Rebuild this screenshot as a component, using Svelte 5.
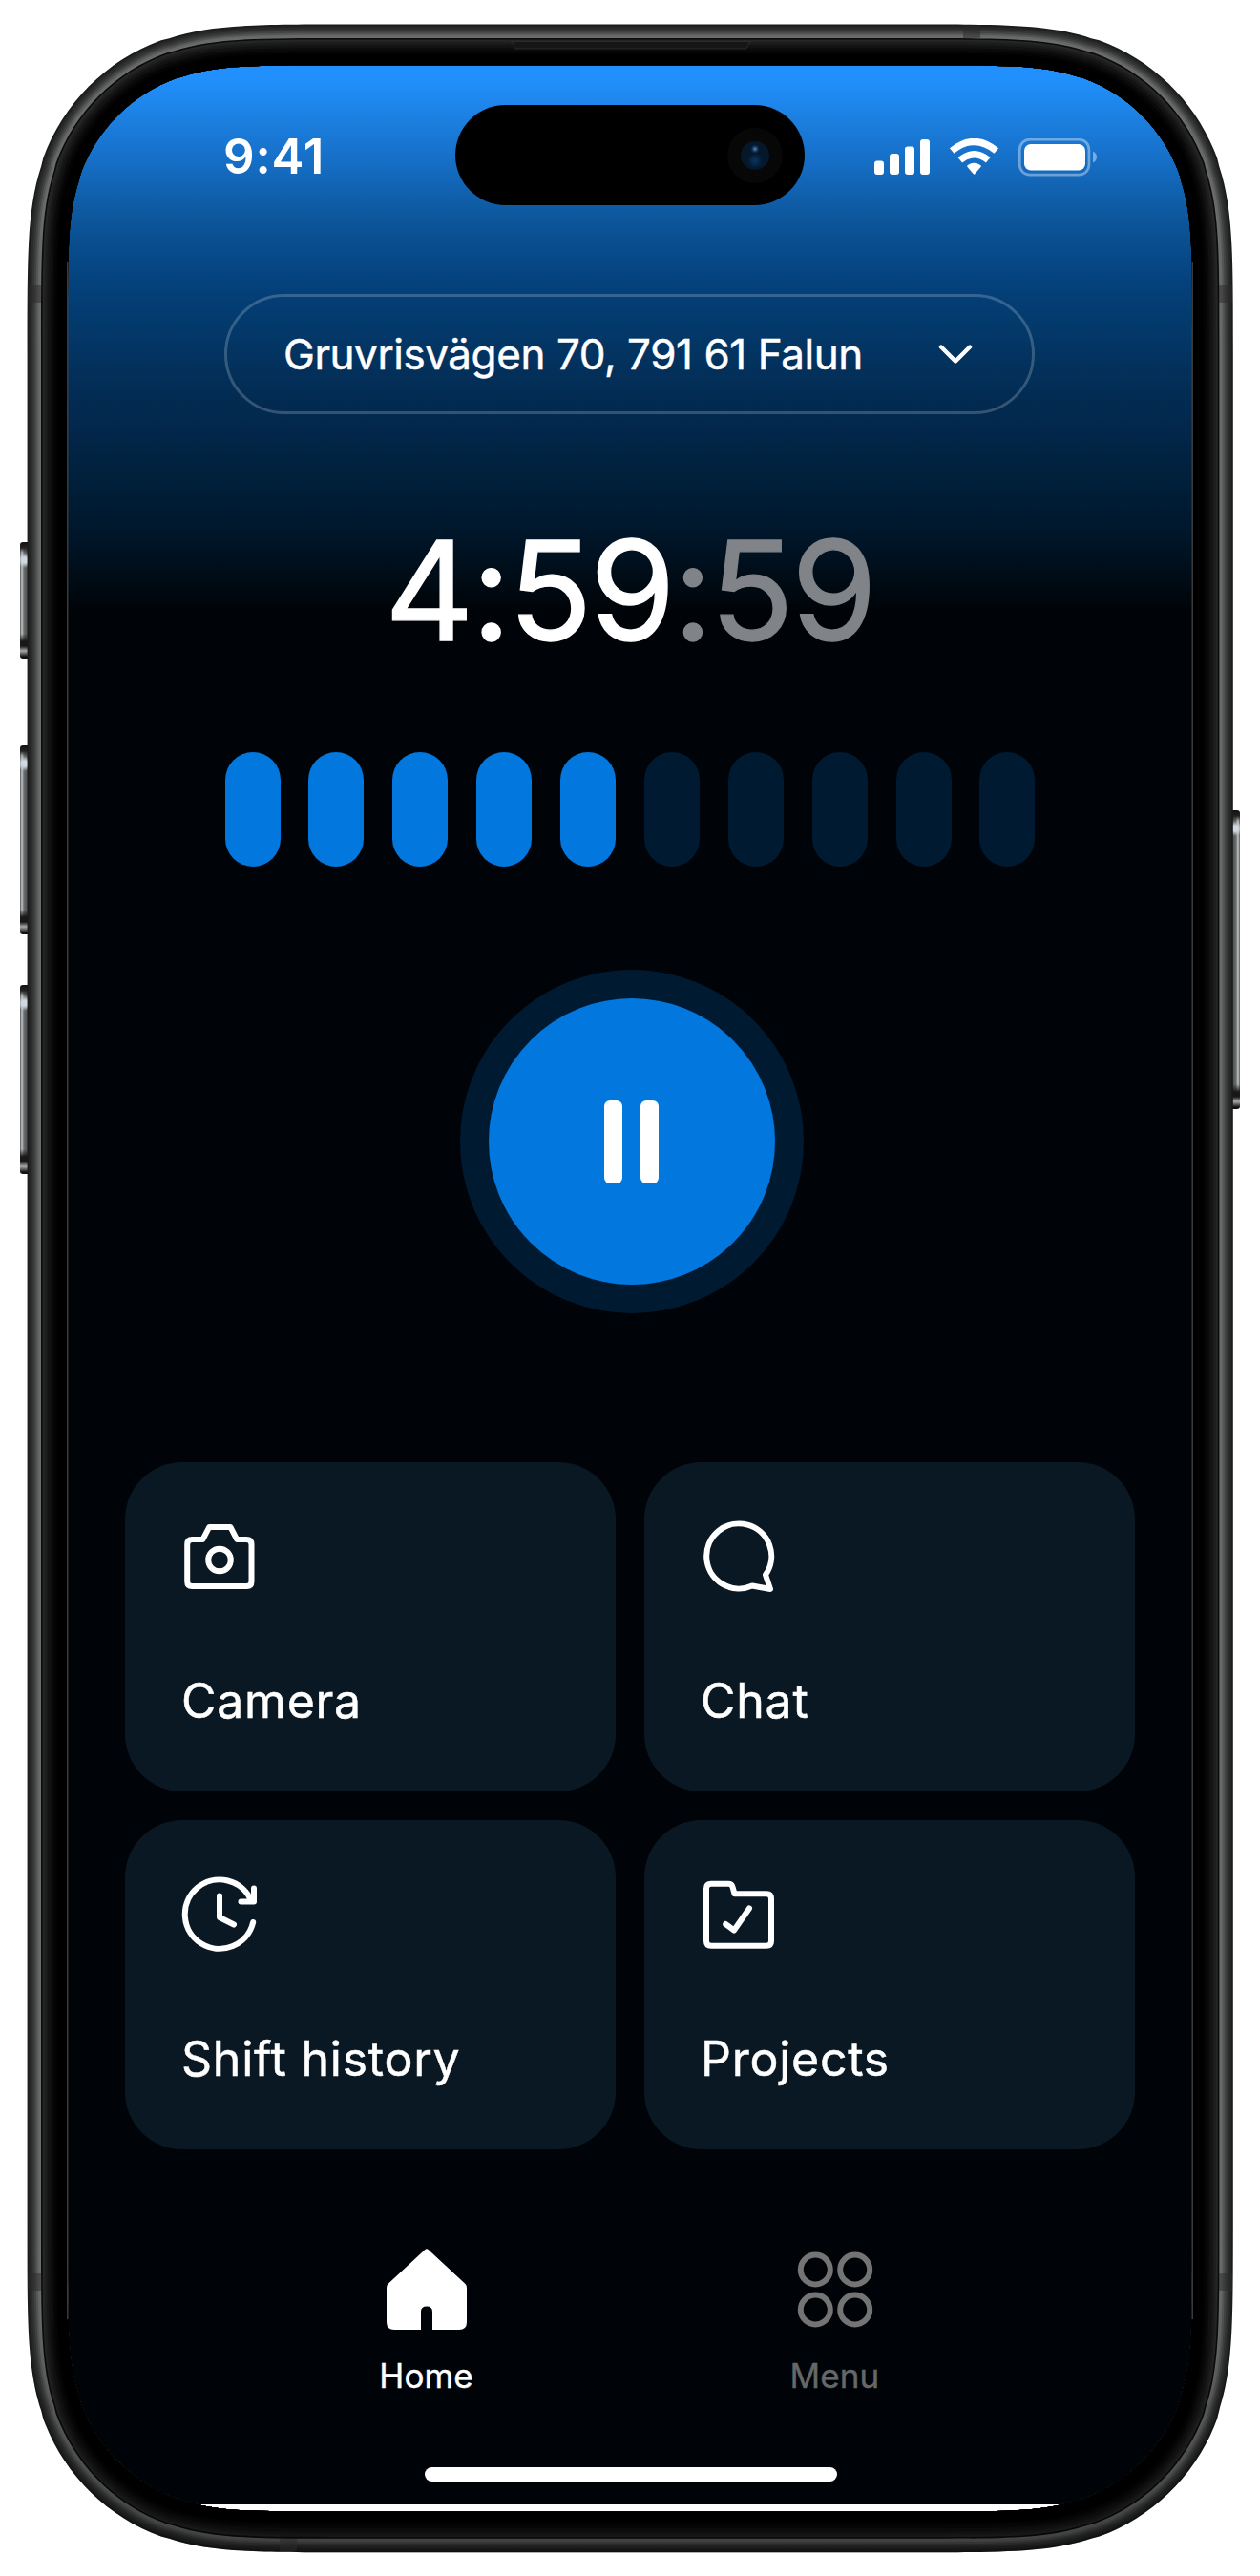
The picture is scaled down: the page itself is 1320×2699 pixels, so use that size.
<script>
  // Continuous-curvature rounded rectangle; r is the nominal corner radius.
  function squircle(x, y, w, h, r) {
    const R = x + w;
    const B = y + h;
    const k = [1.528665, 1.088493, 0.868407, 0.669934, 0.065496, 0.631494, 0.074911, 0.372824, 0.169059].map((n) => n * r);
    const [a, b, c, d, e, f, g, i, j] = k;
    const p = (px, py) => `${px.toFixed(2)} ${py.toFixed(2)}`;
    return [
      `M${p(x + a, y)}L${p(R - a, y)}`,
      `C${p(R - b, y)} ${p(R - c, y)} ${p(R - d, y + e)}L${p(R - f, y + g)}`,
      `C${p(R - i, y + j)} ${p(R - j, y + i)} ${p(R - g, y + f)}L${p(R - e, y + d)}`,
      `C${p(R, y + c)} ${p(R, y + b)} ${p(R, y + a)}L${p(R, B - a)}`,
      `C${p(R, B - b)} ${p(R, B - c)} ${p(R - e, B - d)}L${p(R - g, B - f)}`,
      `C${p(R - j, B - i)} ${p(R - i, B - j)} ${p(R - f, B - g)}L${p(R - d, B - e)}`,
      `C${p(R - c, B)} ${p(R - b, B)} ${p(R - a, B)}L${p(x + a, B)}`,
      `C${p(x + b, B)} ${p(x + c, B)} ${p(x + d, B - e)}L${p(x + f, B - g)}`,
      `C${p(x + i, B - j)} ${p(x + j, B - i)} ${p(x + g, B - f)}L${p(x + e, B - d)}`,
      `C${p(x, B - c)} ${p(x, B - b)} ${p(x, B - a)}L${p(x, y + a)}`,
      `C${p(x, y + b)} ${p(x, y + c)} ${p(x + e, y + d)}L${p(x + g, y + f)}`,
      `C${p(x + j, y + i)} ${p(x + i, y + j)} ${p(x + f, y + g)}L${p(x + d, y + e)}`,
      `C${p(x + c, y)} ${p(x + b, y)} ${p(x + a, y)}Z`
    ].join('');
  }

  const hole = squircle(71, 68.5, 1178, 2563, 180);
  const ring = (inset) =>
    squircle(28.6 + inset, 25.6 + inset, 1263.2 - inset * 2, 2648.6 - inset * 2, 222 - inset) + hole;

  // Metal bezel shades, from the outer edge inwards.
  const shades = [
    [0, '#1b1b1b'], [1.5, '#232424'], [3, '#2a2b2b'], [5, '#343535'], [7, '#424343'],
    [9, '#545555'], [11, '#666767'], [13, '#6c6e6e'], [14.4, '#0b0b0b'], [16, '#262626'],
    [18, '#1f1f1f'], [20, '#191919'], [22, '#121212'], [25, '#0a0a0a'], [28, '#040404'], [31, '#000000']
  ];

  const segments = Array.from({ length: 10 }, (_, i) => i < 5);
  const cards = [
    { id: 'camera', label: 'Camera' },
    { id: 'chat', label: 'Chat' },
    { id: 'history', label: 'Shift history' },
    { id: 'projects', label: 'Projects' }
  ];
</script>

<div class="stage">
  <span class="key action"></span>
  <span class="key up"></span>
  <span class="key down"></span>
  <span class="key power"></span>

  <main class="screen">
    <header class="status">
      <span class="clock">9:41</span>
      <div class="island"><span class="sensor"><span class="lens"></span></span></div>
      <svg class="indicators" width="234" height="40" viewBox="0 0 234 40">
        <g fill="#fff">
          <rect x="0" y="23.5" width="10" height="14.5" rx="3" />
          <rect x="16" y="16" width="10" height="22" rx="3" />
          <rect x="32" y="8.5" width="10" height="29.5" rx="3" />
          <rect x="48" y="1" width="10" height="37" rx="3" />
          <path d="M103.800 37.300L97.600 30.100Q96.600 28.900 97.900 28Q104.500 23.600 111.100 28Q112.400 28.900 111.400 30.100L105.200 37.300Q104.500 38.100 103.800 37.300Z" />
        </g>
        <path d="M81.200 13Q104.500 -6 127.800 13M89.800 22.800Q104.500 10.800 119.200 22.800" fill="none" stroke="#fff" stroke-width="7.200" />
        <rect x="152.300" y="1.200" width="72.600" height="37" rx="10.500" fill="none" stroke="#fff" stroke-opacity=".38" stroke-width="2.700" />
        <rect x="157" y="6" width="64" height="27.500" rx="7" fill="#fff" />
        <path d="M229 13.500Q233 15.500 233 19.500T229 25.500Z" fill="#fff" fill-opacity=".42" />
      </svg>
    </header>

    <button class="address">
      <span class="address-text">Gruvrisvägen 70, 791 61 Falun</span>
      <svg width="40" height="28" viewBox="0 0 40 28"><path d="M5 6.500L20 21.500L35 6.500" /></svg>
    </button>

    <div class="timer">4:59<span>:59</span></div>

    <div class="progress">
      {#each segments as on}<span class:on></span>{/each}
    </div>

    <button class="pause" aria-label="Pause"><span></span><span></span></button>

    <section class="cards">
      {#each cards as card}
        <button class="card">
          <svg width="80" height="80" viewBox="0 0 80 80">
            {#if card.id === 'camera'}
              <path d="M11.500 22H22.500L29.200 9H51.500L58.200 22H68.200Q73.500 22 73.500 27.300V66Q73.500 71 68.500 71H11.200Q6.200 71 6.200 66V27.300Q6.200 22 11.500 22Z" />
              <circle cx="40" cy="43.500" r="11.800" />
            {:else if card.id === 'chat'}
              <path d="M68 59L73 74L54 70.500A34 34 0 1 1 68 59Z" />
            {:else if card.id === 'history'}
              <path d="M75.200 48A36.200 36.200 0 1 1 73.500 26M76 12.500V26.500H62.500M40 20.500V43L55 50.500" />
            {:else}
              <path d="M11 7.700H29Q32.500 7.700 33.500 11L35.500 18.300H69Q74 18.300 74 23.300V67.700Q74 72.700 69 72.700H11Q6 72.700 6 67.700V12.700Q6 7.700 11 7.700Z" />
              <path d="M26.200 50L35 56.500L51 33.500" />
            {/if}
          </svg>
          <span class="label">{card.label}</span>
        </button>
      {/each}
    </section>

    <nav>
      <div class="tab">
        <svg width="84" height="86" viewBox="0 0 84 86">
          <path d="M40 1.200Q42 -.5 44 1.200L82.500 37Q84 38.500 84 41V77Q84 85 76 85H48V66Q48 60.500 42 60.500T36 66V85H8Q0 85 0 77V41Q0 38.500 1.500 37Z" fill="#fff" />
        </svg>
        <span>Home</span>
      </div>
      <div class="tab muted">
        <svg width="84" height="86" viewBox="0 0 84 86" fill="none" stroke="#737473" stroke-width="6">
          <circle cx="21.300" cy="22" r="15.500" /><circle cx="62.700" cy="22" r="15.500" />
          <circle cx="21.300" cy="64" r="15.500" /><circle cx="62.700" cy="64" r="15.500" />
        </svg>
        <span>Menu</span>
      </div>
    </nav>

    <div class="home-bar"></div>
    <div class="edge"></div>
  </main>

  <svg class="frame" width="1320" height="2699" viewBox="0 0 1320 2699">
    <defs>
      <linearGradient id="shade" x1="0" y1="2400" x2="0" y2="2674" gradientUnits="userSpaceOnUse">
        <stop offset="0" stop-color="#000" stop-opacity="0" />
        <stop offset="1" stop-color="#000" stop-opacity=".4" />
      </linearGradient>
    </defs>
    {#each shades as [inset, color]}
      <path d={ring(inset)} fill={color} fill-rule="evenodd" />
    {/each}
    <path d={ring(0)} fill="url(#shade)" fill-rule="evenodd" />
    <path d="M70.800 275V2430M1249.200 275V2430" stroke="#4a4848" stroke-width="1.200" />
    <path d="M535 43.500Q538 44 538.500 48T542 51H780Q783 51 784 47T787 43.500Z" fill="#161616" stroke="#2b2b2b" />
    <path d="M29.500 308H43M1277 308H1291M29.500 2391H43M1277 2391H1291" stroke="#2a2a2a" stroke-opacity=".5" stroke-width="18" />
    <path d="M1018 26.500V40M302 2660V2673" stroke="#2a2a2a" stroke-opacity=".5" stroke-width="18" />
  </svg>
</div>

<style>
  :global(body) { background: #fff; }
  .stage {
    position: relative;
    box-sizing: border-box;
    width: 1320px;
    height: 2699px;
    padding: 68px 70px 67px;
    overflow: hidden;
    font-family: Inter, 'Liberation Sans', sans-serif;
    font-weight: 400;
    color: #fff;
  }
  .frame { position: absolute; inset: 0; pointer-events: none; }
  .key {
    position: absolute;
    left: 21px;
    width: 10px;
    border-radius: 3px 0 0 3px;
    background:
      linear-gradient(180deg, #111 0, #222 6px, transparent 11px, transparent calc(100% - 26px), #181818 calc(100% - 18px), #181818 calc(100% - 13px), #aaa calc(100% - 8px), #111 calc(100% - 2px)),
      radial-gradient(circle at 5px 19px, #d0d8e0 0, #d0d8e0 3px, transparent 8px),
      linear-gradient(90deg, #555 0, #bfc6ca 2px, #6c6e6e 4px, #4a4b4b 8px);
  }
  .action { top: 568px; height: 122px; }
  .up { top: 781px; height: 198px; }
  .down { top: 1032px; height: 198px; }
  .power { top: 849px; height: 313px; left: 1289px; transform: scaleX(-1); }

  button { margin: 0; border: 0; padding: 0; background: none; color: inherit; font: inherit; text-align: left; }
  .screen {
    display: flex;
    flex-direction: column;
    align-items: center;
    box-sizing: border-box;
    height: 2564px;
    overflow: hidden;
    border-radius: 175px;
    background:
      linear-gradient(180deg, #2190fc 0, #2190fc 14px, #1f88ef 35px, #1b7cdb 65px, #166fc7 99px, #1162b0 132px, #0c5599 165px, #074a89 199px, #04407a 232px, #033b6e 265px, #032e57 332px, #022649 389px, #00203b 432px, #00162a 492px, #000d18 532px, #000408 572px)
      no-repeat 0 0 / 100% 576px #000408;
  }

  .status {
    display: grid;
    grid-template-columns: 169px 366px 234px;
    align-items: center;
    align-self: flex-start;
    column-gap: 73px;
    height: 105px;
    margin: 42px 0 0 165px;
  }
  .clock { margin-left: -1px; padding-top: 3px; font-size: 51px; font-weight: 600; line-height: 60px; letter-spacing: .8px; white-space: nowrap; }
  .island { display: flex; align-items: center; justify-content: flex-end; box-sizing: border-box; height: 105px; padding-right: 23px; border-radius: 53px; background: #000; }
  .sensor { display: grid; place-items: center; width: 58px; height: 58px; border-radius: 50%; background: #070707; }
  .lens { width: 30px; height: 30px; border-radius: 50%; background: radial-gradient(circle at 50% 27%, #5d86ac 0, #173a60 10%, transparent 17%), radial-gradient(circle at 50% 68%, #0b3563 0, transparent 32%), #05172a; }
  .indicators { margin-top: 4px; }

  .address {
    display: flex;
    align-items: center;
    justify-content: space-between;
    box-sizing: border-box;
    width: 849px;
    height: 126px;
    margin: 93px 1px 0 0;
    padding: 0 60px 0 59px;
    border: 3px solid rgba(255, 255, 255, .2);
    border-radius: 63px;
  }
  .address-text { font-size: 44px; line-height: 60px; letter-spacing: -.43px; white-space: nowrap; -webkit-text-stroke: .5px currentColor; }
  .address path { fill: none; stroke: #fff; stroke-width: 4.4; stroke-linecap: round; stroke-linejoin: round; }

  .timer { margin: 97px 1px 0 0; height: 176px; font-size: 145px; line-height: 176px; letter-spacing: -2.9px; white-space: nowrap; -webkit-text-stroke: 1.3px currentColor; }
  .timer span { color: #808488; }

  .progress { display: grid; grid-template-columns: repeat(10, 58px); justify-content: space-between; width: 849px; height: 120px; margin-top: 81px; }
  .progress span { border-radius: 29px; background: #001a31; }
  .progress .on { background: #0277de; }

  .pause {
    display: flex;
    align-items: center;
    justify-content: center;
    gap: 19px;
    box-sizing: border-box;
    width: 360px;
    height: 360px;
    margin: 108px 0 0 3px;
    border: 30px solid #001a31;
    border-radius: 50%;
    background: #0277de;
  }
  .pause span { width: 19px; height: 87px; border-radius: 6px; background: #fff; }

  .cards { display: grid; grid-template-columns: 514px 514px; grid-template-rows: 345px 345px; gap: 30px; margin-top: 156px; }
  .card {
    display: flex;
    flex-direction: column;
    align-items: flex-start;
    justify-content: space-between;
    padding: 59px 59px 65px;
    border-radius: 60px;
    background: #0a1823;
  }
  .card svg { fill: none; stroke: #fff; stroke-width: 6; stroke-linecap: round; stroke-linejoin: round; }
  .label { font-size: 50px; line-height: 60px; letter-spacing: .75px; white-space: nowrap; -webkit-text-stroke: .5px currentColor; }

  nav { display: flex; justify-content: space-between; width: 528px; margin: 104px 0 0 1px; }
  .tab { display: flex; flex-direction: column; align-items: center; gap: 25px; width: 100px; }
  .tab span { font-size: 35px; line-height: 44px; letter-spacing: .1px; -webkit-text-stroke: .4px currentColor; }
  .muted span { color: #666867; }

  .home-bar { width: 432px; height: 15px; margin: 74px 0 0 2px; border-radius: 8px; background: #fff; }
  .edge { width: 100%; height: 8px; margin-top: auto; background: #fff; }
</style>
